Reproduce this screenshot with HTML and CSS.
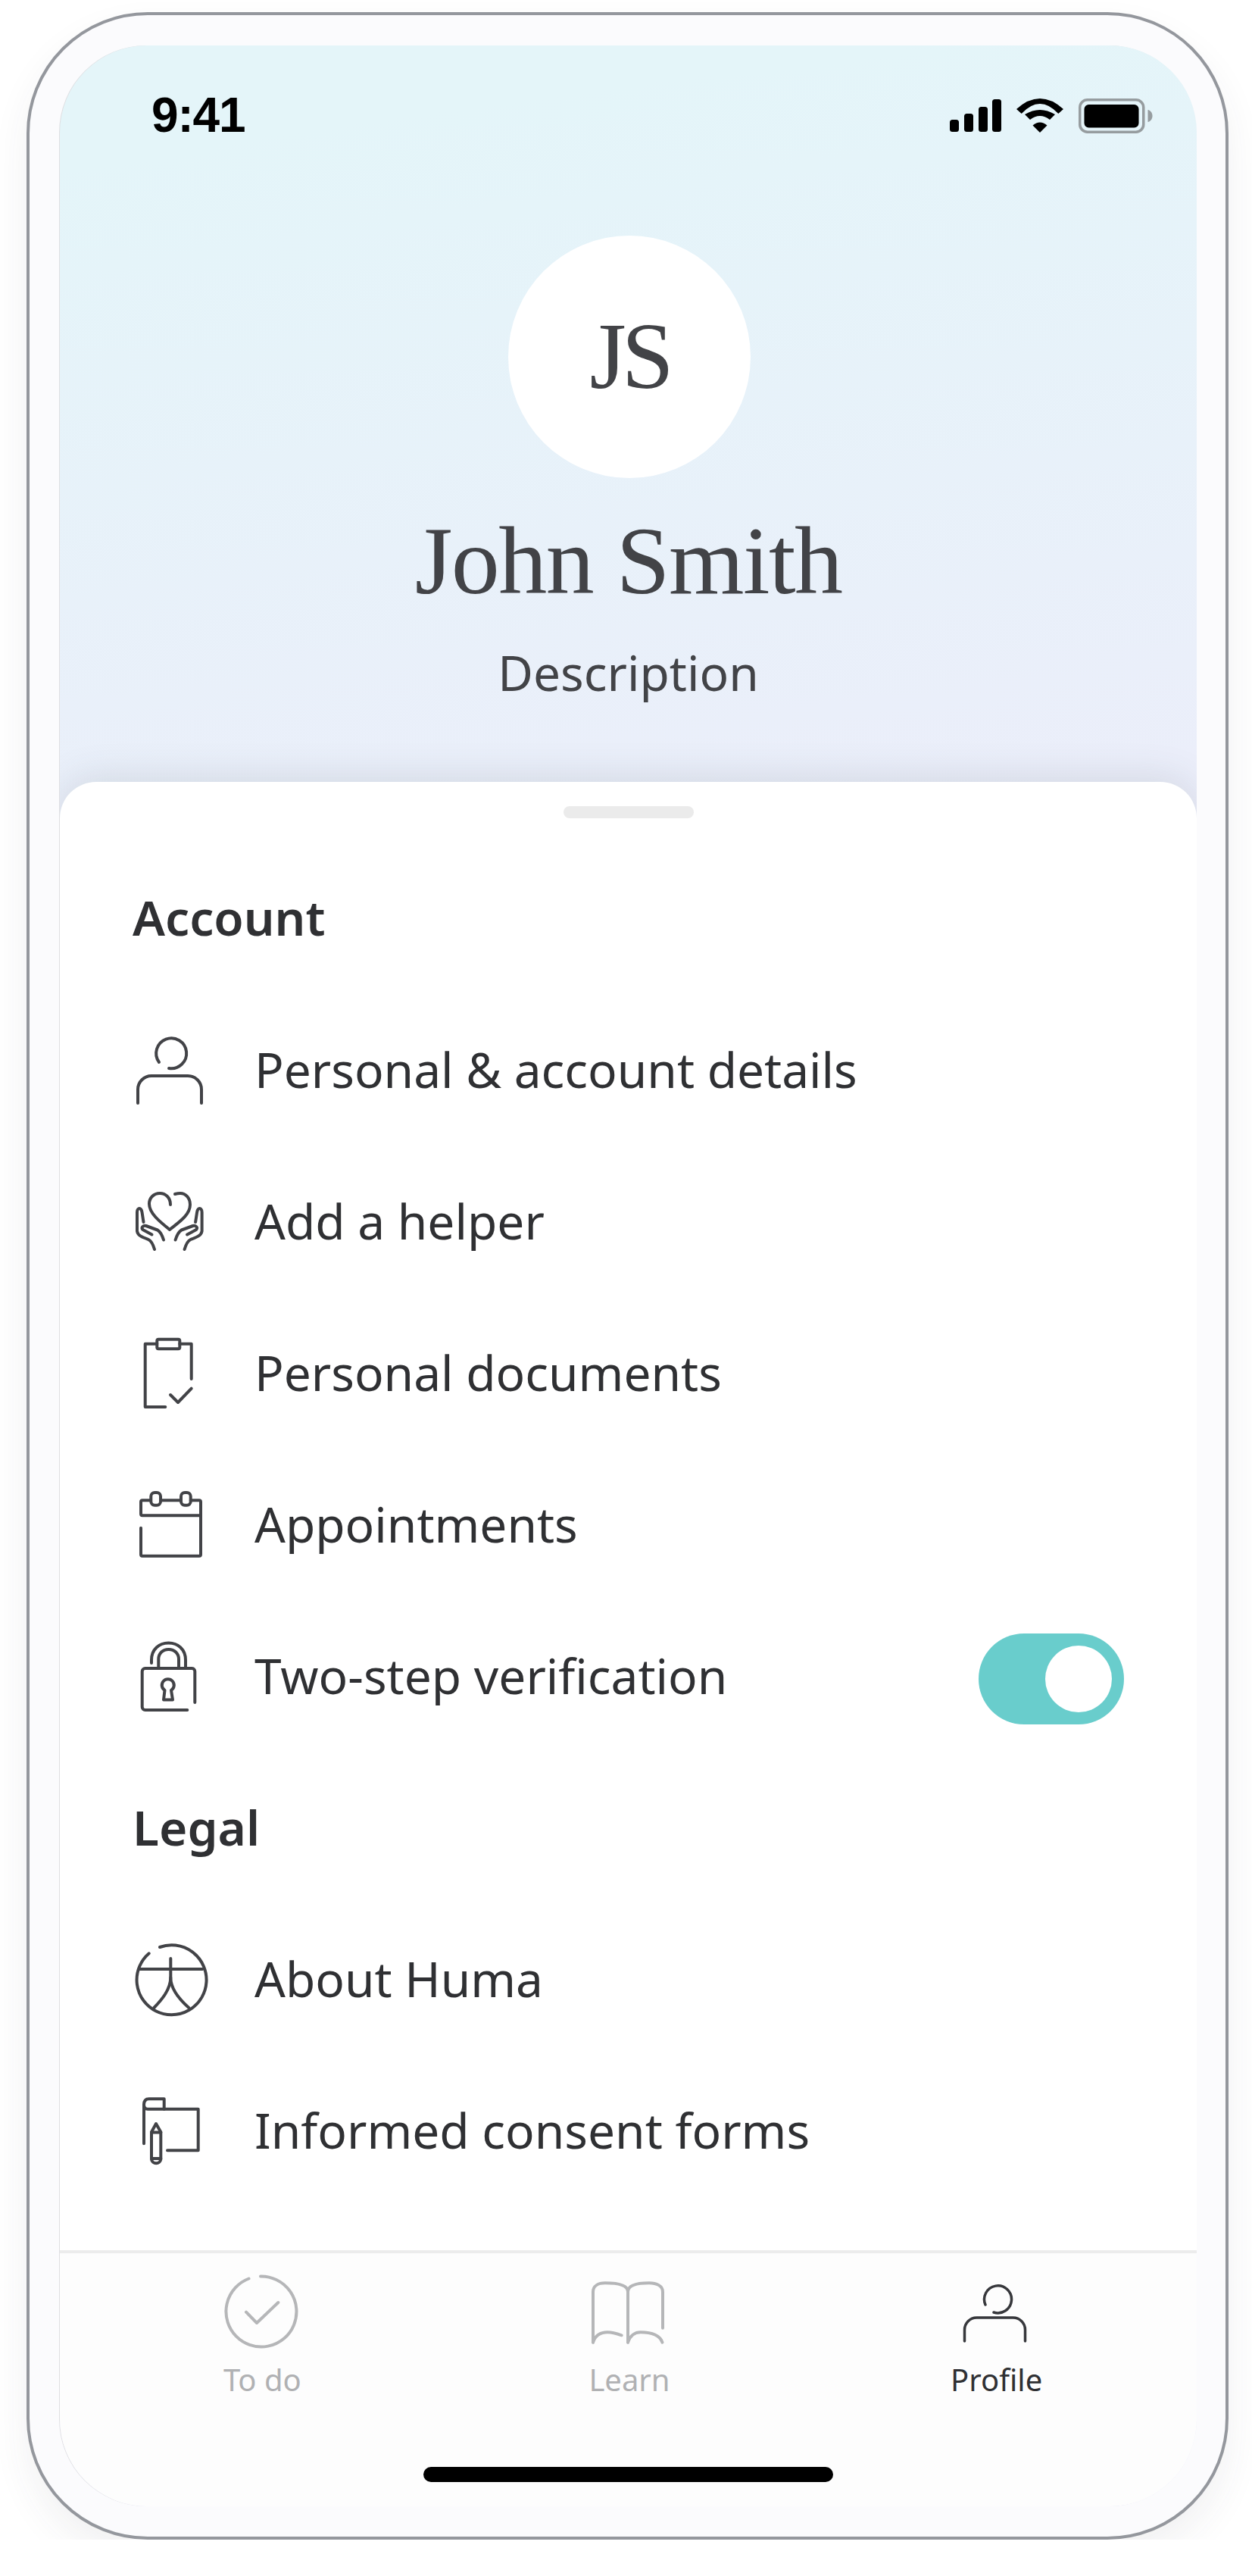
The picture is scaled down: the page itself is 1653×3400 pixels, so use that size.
FILE: index.html
```html
<!DOCTYPE html>
<html lang="en">
<head>
  <meta charset="UTF-8">
  <title>Profile</title>
  <link rel="stylesheet" href="styles.css">
</head>
<body>
  <div class="device">
    <div class="screen">

      <div class="hero">
        <div class="status-bar">
          <span class="time">9:41</span>
          <div class="status-icons">
            <svg class="signal" width="68" height="44" viewBox="0 0 68 44">
              <rect x="0" y="27" width="12" height="16" rx="3.5"/>
              <rect x="19" y="19" width="12" height="24" rx="3.5"/>
              <rect x="38" y="10" width="12" height="33" rx="3.5"/>
              <rect x="56" y="0" width="12" height="43" rx="3.5"/>
            </svg>
            <svg class="wifi" width="62" height="46" viewBox="0 0 62 46">
              <path d="M0 14 Q31 -14 62 14 L55.3 20 Q31 -6 6.7 20 Z"/>
              <path d="M11 21 Q31 9 51 21 L44 28 Q31 18 18 28 Z"/>
              <path d="M31 45 L21.5 35.5 Q31 27.5 40.5 35.5 Z"/>
            </svg>
            <svg class="battery" width="98" height="46" viewBox="0 0 98 46">
              <rect class="battery-case" x="1.75" y="1.75" width="84" height="42.5" rx="10"/>
              <rect x="7.5" y="8" width="72" height="30.5" rx="6"/>
              <path class="battery-cap" d="M91.5 15 C95 15.5 97.5 19 97.5 23 C97.5 27 95 30.5 91.5 31 Z"/>
            </svg>
          </div>
        </div>
        <div class="avatar">JS</div>
        <h1 class="name">John Smith</h1>
        <p class="description">Description</p>
      </div>

      <div class="sheet">
        <div class="handle"></div>

        <h2 class="section-title">Account</h2>
        <div class="row">
          <svg class="icon" viewBox="0 0 100 100">
            <path d="M35 38 A20 20 0 1 1 48 46"/>
            <path d="M7 92 V74 A18 18 0 0 1 25 56 H73 A18 18 0 0 1 91 74 V92"/>
          </svg>
          <span class="row-label">Personal &amp; account details</span>
        </div>
        <div class="row">
          <svg class="icon" viewBox="0 0 100 100">
            <path d="M50 26 C50 16 43 11 36 11 C28 11 22 17 22 25 C22 38 38 50 49 59 C60 50 76 40 76 26 C76 17 70 11 63 11 C60 11 58 11.5 56 12"/>
            <g id="hand">
              <path d="M29 85 C27 78 25 74 21 72 C13 69 7 67 6 61 V36 C6 32 8 31 9 31 C11 31 12 33 12.5 36 L14.5 49"/>
              <path d="M41 72.5 C39 66 37 62 33 59.5 L18 54 C14 53 11 56 13.5 59 L25.5 65.5"/>
            </g>
            <use href="#hand" transform="matrix(-1 0 0 1 97.6 0)"/>
          </svg>
          <span class="row-label">Add a helper</span>
        </div>
        <div class="row">
          <svg class="icon" viewBox="0 0 100 100">
            <path d="M43.3 93 H16.7 V9.7 H32.3"/>
            <path d="M62.3 9.7 H77.7 V56"/>
            <rect x="32.3" y="3.7" width="30" height="12.6" rx="2"/>
            <path d="M50 77 L60 87 L77.7 68.7"/>
          </svg>
          <span class="row-label">Personal documents</span>
        </div>
        <div class="row">
          <svg class="icon" viewBox="0 0 100 100">
            <path d="M24 16.3 H13 A2 2 0 0 0 11 18.3 V34.3 A2 2 0 0 0 13 36.3 H90"/>
            <path d="M37.7 16.3 H64"/>
            <path d="M76.7 16.3 H88 A2 2 0 0 1 90 18.3 V87.7 A2 2 0 0 1 88 89.7 H13 A2 2 0 0 1 11 87.7 V52.7"/>
            <rect x="24.3" y="6" width="12.7" height="16.7" rx="5"/>
            <rect x="64" y="6" width="12.7" height="16.7" rx="5"/>
          </svg>
          <span class="row-label">Appointments</span>
        </div>
        <div class="row">
          <svg class="icon" viewBox="0 0 100 100">
            <path d="M82.3 83 V42 A4 4 0 0 0 78.3 38 H16.7 A4 4 0 0 0 12.7 42 V89 A4 4 0 0 0 16.7 93 H72.3"/>
            <path d="M25 31 V27 C25 13 35 4.5 47.5 4.5 C60 4.5 70 13 70 27 V38"/>
            <path d="M34.3 38 V26 C34.3 18 40 13 47.7 13 C55 13 61 18 61 26 V38"/>
            <path d="M42.5 67 A8 8 0 1 1 51 67 L53 79.5 H41 Z"/>
          </svg>
          <span class="row-label">Two-step verification</span>
          <div class="toggle"><div class="toggle-knob"></div></div>
        </div>

        <h2 class="section-title section-title-legal">Legal</h2>
        <div class="row">
          <svg class="icon" viewBox="0 0 100 100">
            <path d="M36 6 A46 46 0 1 1 21.7 14.3"/>
            <path d="M8.3 35 H92.3"/>
            <path d="M50.3 21 V46 C50.3 62 38 76 28.3 86"/>
            <path d="M50.3 46 C50.3 62 63 76 74.3 86"/>
          </svg>
          <span class="row-label">About Huma</span>
        </div>
        <div class="row">
          <svg class="icon" viewBox="0 0 100 100">
            <path d="M15 65.3 V14 C15 9 17 6.3 21.7 6.3 H41.7 V19.7"/>
            <path d="M15 14 C15 17.5 17 19.7 20 19.7 H86.7 V74.3 H46"/>
            <path d="M25 50 L31 39 L37.3 50 V86 A6.2 6 0 0 1 25 86 Z"/>
            <path d="M25 50.5 H37.3"/>
            <path d="M25 85 H37.3"/>
          </svg>
          <span class="row-label">Informed consent forms</span>
        </div>
      </div>

      <div class="tab-bar">
        <div class="tabs">
          <div class="tab">
            <svg class="icon" viewBox="0 0 100 100">
              <path d="M49 3.5 A46.5 46.5 0 1 1 33.5 6.5"/>
              <path d="M30 50.7 L44 65 L72.3 38"/>
            </svg>
            <span class="tab-label">To do</span>
          </div>
          <div class="tab">
            <svg class="icon" viewBox="0 0 100 100">
              <path d="M4 90.7 V24 C4 16 11 12.3 20 12.3 C34 12.3 50 14 50 24 V90.7"/>
              <path d="M50 24 C50 14 64 12.3 78 12.3 C88 12.3 96 16 96 24 V71.7"/>
              <path d="M4 90.7 C7 81 15 77.3 23.3 77.3 C29 77.3 35 79 41.7 81.3"/>
              <path d="M50 90.7 C53 81 60 77.3 66.7 77.3 C80 77.3 92 81 95.5 90.7"/>
            </svg>
            <span class="tab-label">Learn</span>
          </div>
          <div class="tab tab-active">
            <svg class="icon tab-person" viewBox="0 0 100 100">
              <path d="M37 41 A18 18 0 1 1 48 51"/>
              <path d="M9.5 89 V74 A16 16 0 0 1 25.5 58 H73.5 A16 16 0 0 1 89.5 74 V89"/>
            </svg>
            <span class="tab-label">Profile</span>
          </div>
        </div>
        <div class="home-bar"></div>
      </div>

    </div>
  </div>
</body>
</html>
```

FILE: styles.css
```css
body {
  margin: 0;
  background: white;
  font-family: "Noto Sans", "Open Sans", sans-serif;
}

.device {
  box-sizing: border-box;
  width: 1587px;
  height: 3336px;
  margin: 16px 0 0 35px;
  padding: 40px 38px 40px 40px;
  background: #fbfbfd;
  border: 4px solid #94979d;
  border-radius: 160px;
  box-shadow: 0 24px 50px rgba(60, 60, 70, 0.07);
}

.screen {
  display: flex;
  flex-direction: column;
  height: 100%;
  overflow: hidden;
  border-radius: 115px;
  box-shadow: -1px 0 0 #dfdfe2;
  background: #ecedfa linear-gradient(172deg, #e4f5f9 12%, #ecedfa 100%) top / 100% 1100px no-repeat;
}

/* top part */
.hero {
  display: flex;
  flex-direction: column;
  align-items: center;
  height: 972px;
  flex-shrink: 0;
  color: #424347;
}

.status-bar {
  box-sizing: border-box;
  display: flex;
  justify-content: space-between;
  align-items: center;
  width: 100%;
  height: 128px;
  padding: 56px 58px 0 121px;
}

.time {
  font-family: "Liberation Sans", sans-serif;
  font-size: 64px;
  font-weight: bold;
  line-height: 70px;
  letter-spacing: -1.2px;
  color: black;
}

.status-icons {
  display: flex;
  align-items: center;
  gap: 20px;
  margin-top: 2px;
}

.status-icons svg {
  display: block;
}

.battery-case {
  fill: none;
  stroke: #969c9f;
  stroke-width: 3.5;
}

.battery-cap {
  fill: #969c9f;
}

.avatar {
  width: 320px;
  height: 320px;
  margin: 123px 0 0 3px;
  flex-shrink: 0;
  display: flex;
  align-items: center;
  justify-content: center;
  background: white;
  border-radius: 50%;
  font-family: "Liberation Serif", serif;
  font-size: 124px;
  letter-spacing: -6px;
}

.name {
  margin: 39px 0 0;
  font-family: "Liberation Serif", serif;
  font-size: 128px;
  font-weight: normal;
  line-height: 140px;
  letter-spacing: -1.6px;
}

.description {
  margin: 35px 0 0;
  font-size: 64px;
  line-height: 86px;
}

/* white sheet */
.sheet {
  flex: 1;
  box-sizing: border-box;
  padding: 32px 96px 0;
  background: white;
  border-radius: 48px 48px 0 0;
  border-bottom: 4px solid #ececec;
  box-shadow: 0 -4px 50px rgba(70, 80, 90, 0.15);
}

.handle {
  width: 172px;
  height: 16px;
  margin: 0 auto 87px;
  background: #ebebeb;
  border-radius: 8px;
}

.section-title {
  margin: 0 0 59px;
  font-size: 64px;
  font-weight: 600;
  line-height: 88px;
  color: #2f3033;
}

.section-title-legal {
  margin: 54px 0 58px;
}

.row {
  display: flex;
  align-items: center;
  height: 200px;
  color: #2f3033;
}

.row-label {
  margin-left: 61px;
  padding-bottom: 6px;
  font-size: 64px;
}

.icon {
  width: 100px;
  height: 100px;
  flex-shrink: 0;
  fill: none;
  stroke: #424347;
  stroke-width: 4;
  stroke-linecap: round;
  stroke-linejoin: round;
}

.toggle {
  box-sizing: border-box;
  display: flex;
  justify-content: flex-end;
  width: 192px;
  height: 120px;
  margin: 4px 0 0 auto;
  padding: 16px;
  background: #69cdcc;
  border-radius: 60px;
}

.toggle-knob {
  width: 88px;
  height: 88px;
  background: white;
  border-radius: 50%;
}

/* bottom tabs */
.tab-bar {
  flex-shrink: 0;
  height: 334px;
  box-sizing: border-box;
  padding: 27px 23.5px 0;
  background: #fdfdfd;
}

.tabs {
  display: grid;
  grid-template-columns: repeat(3, 1fr);
}

.tab {
  display: flex;
  flex-direction: column;
  align-items: center;
  color: #b0b1b3;
}

.tab .icon {
  stroke: #b5b6b8;
}

.tab-active {
  color: #2f3033;
}

.tab .tab-person {
  stroke: #37383c;
  stroke-width: 3.5;
}

.tab-label {
  margin: 13px 0 0 3px;
  font-size: 40px;
  line-height: 54px;
}

.home-bar {
  width: 541px;
  height: 20px;
  margin: 88px auto 0;
  background: black;
  border-radius: 10px;
}
```
